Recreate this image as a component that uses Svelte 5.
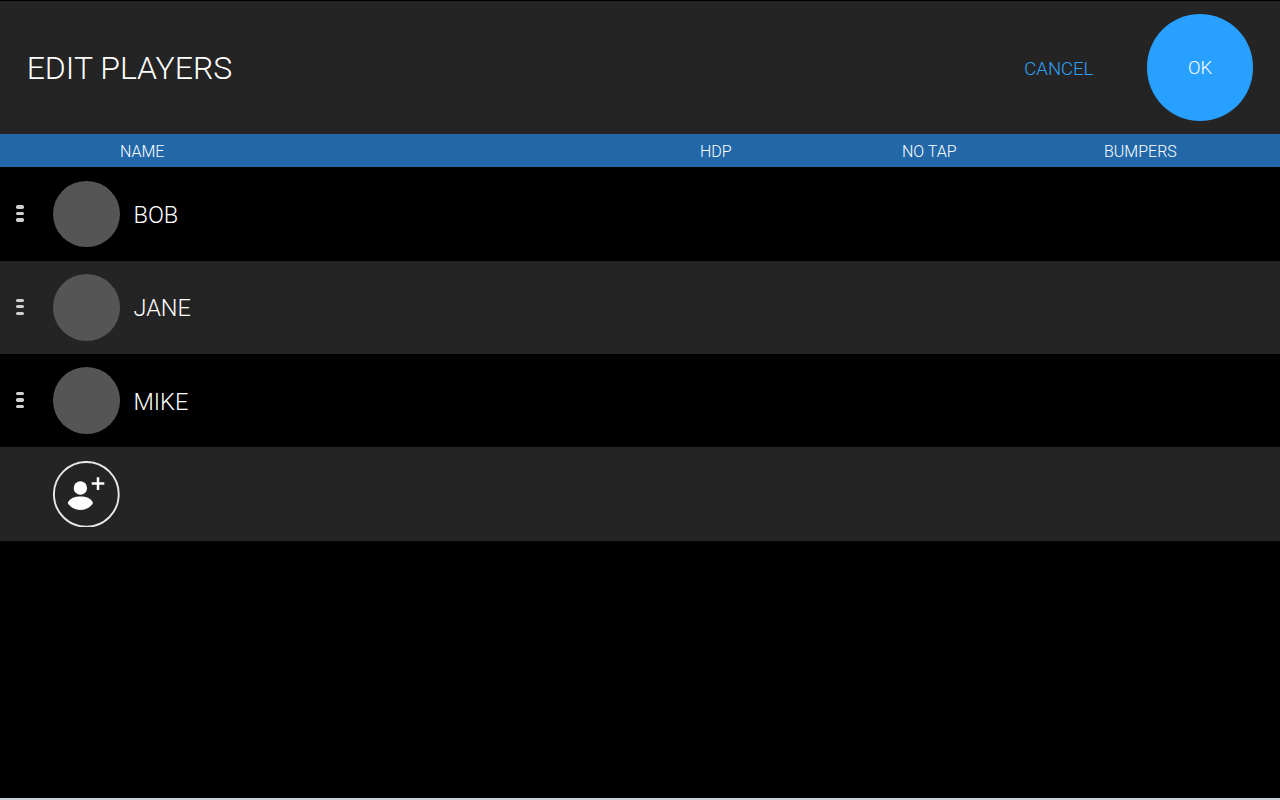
<script>
	const players = ['BOB', 'JANE', 'MIKE'];
	const columns = [
		{ label: 'HDP', cls: 'hdp' },
		{ label: 'NO TAP', cls: 'notap' },
		{ label: 'BUMPERS', cls: 'bumpers' }
	];
</script>

<div class="screen">
	<header class="top">
		<h1>EDIT PLAYERS</h1>
		<button class="cancel">CANCEL</button>
		<button class="ok">OK</button>
	</header>

	<div class="columns">
		<span class="name-col">NAME</span>
		{#each columns as col}
			<span class={col.cls}>{col.label}</span>
		{/each}
	</div>

	{#each players as player, i}
		<div class="row" class:alt={i % 2 === 1}>
			<div class="handle">
				<i></i><i></i><i></i>
			</div>
			<div class="avatar"></div>
			<span class="player">{player}</span>
		</div>
	{/each}

	<div class="row alt add">
		<svg class="add-btn" viewBox="0 0 66.670 66.670">
			<circle class="ring" cx="33.330" cy="33.330" r="32.400" />
			<circle cx="27.400" cy="27" r="6.700" />
			<path d="M14.700 42C17 37 22 35.500 27.400 35.500C33 35.500 38 37 40 42C38 46 33 49 27.400 49C22 49 17 46 14.700 42z" />
			<path class="plus" d="M45 16.300v12.600M38.700 22.600h12.600" />
		</svg>
	</div>

	<div class="spacer"></div>
	<div class="edge"></div>
</div>

<style>
	:global(body) {
		margin: 0;
		background: #000;
	}

	.screen {
		width: 1280px;
		height: 800px;
		display: flex;
		flex-direction: column;
		background: #000;
		color: #fff;
		font-family: Roboto, 'Liberation Sans', sans-serif;
		font-weight: 300;
		overflow: hidden;
	}

	.top {
		height: 133.330px;
		margin-top: 1px;
		flex: none;
		display: flex;
		align-items: center;
		background: #242424;
		padding: 0 26.670px;
		box-sizing: border-box;
	}

	h1 {
		margin: 0;
		font-size: 32px;
		font-weight: 300;
		flex: 1;
	}

	button {
		border: none;
		padding: 0;
		font: inherit;
		cursor: pointer;
	}

	.cancel {
		background: none;
		color: #2ea0f8;
		font-size: 18.500px;
		margin-right: 53.330px;
		padding-top: 2px;
	}

	.ok {
		width: 106.670px;
		height: 106.670px;
		border-radius: 50%;
		background: #28a0ff;
		color: #fff;
		font-size: 18.500px;
	}

	.columns {
		height: 33px;
		flex: none;
		display: grid;
		grid-template-columns: 120px 580px 202px 202px auto;
		align-items: center;
		background: #2268a8;
		font-size: 16px;
		padding-top: 2px;
		box-sizing: border-box;
	}

	.name-col {
		grid-column: 2;
	}

	.row {
		height: 93.330px;
		flex: none;
		display: flex;
		align-items: center;
		background: #000;
		box-sizing: border-box;
	}

	.row.alt {
		background: #242424;
	}

	.row.add {
		padding-left: 53.330px;
	}

	.handle {
		width: 53.330px;
		flex: none;
		display: flex;
		flex-direction: column;
		gap: 3.330px;
		padding-left: 15.670px;
		box-sizing: border-box;
		margin-top: -1px;
	}

	.handle i {
		display: block;
		width: 8.330px;
		height: 3.330px;
		border-radius: 1.670px;
		background: #d0d0d0;
	}

	.avatar {
		width: 66.670px;
		height: 66.670px;
		border-radius: 50%;
		background: #555;
		flex: none;
	}

	.add-btn {
		width: 66.670px;
		height: 66.670px;
		flex: none;
		fill: #fff;
	}

	.ring {
		fill: none;
		stroke: #e8e8e8;
		stroke-width: 1.900;
	}

	.plus {
		fill: none;
		stroke: #fff;
		stroke-width: 2.500;
	}

	.player {
		margin-left: 13.500px;
		margin-top: 2px;
		font-size: 23.500px;
	}

	.spacer {
		flex: 1;
	}

	.edge {
		height: 2px;
		flex: none;
		background: #c9d0d8;
	}
</style>
